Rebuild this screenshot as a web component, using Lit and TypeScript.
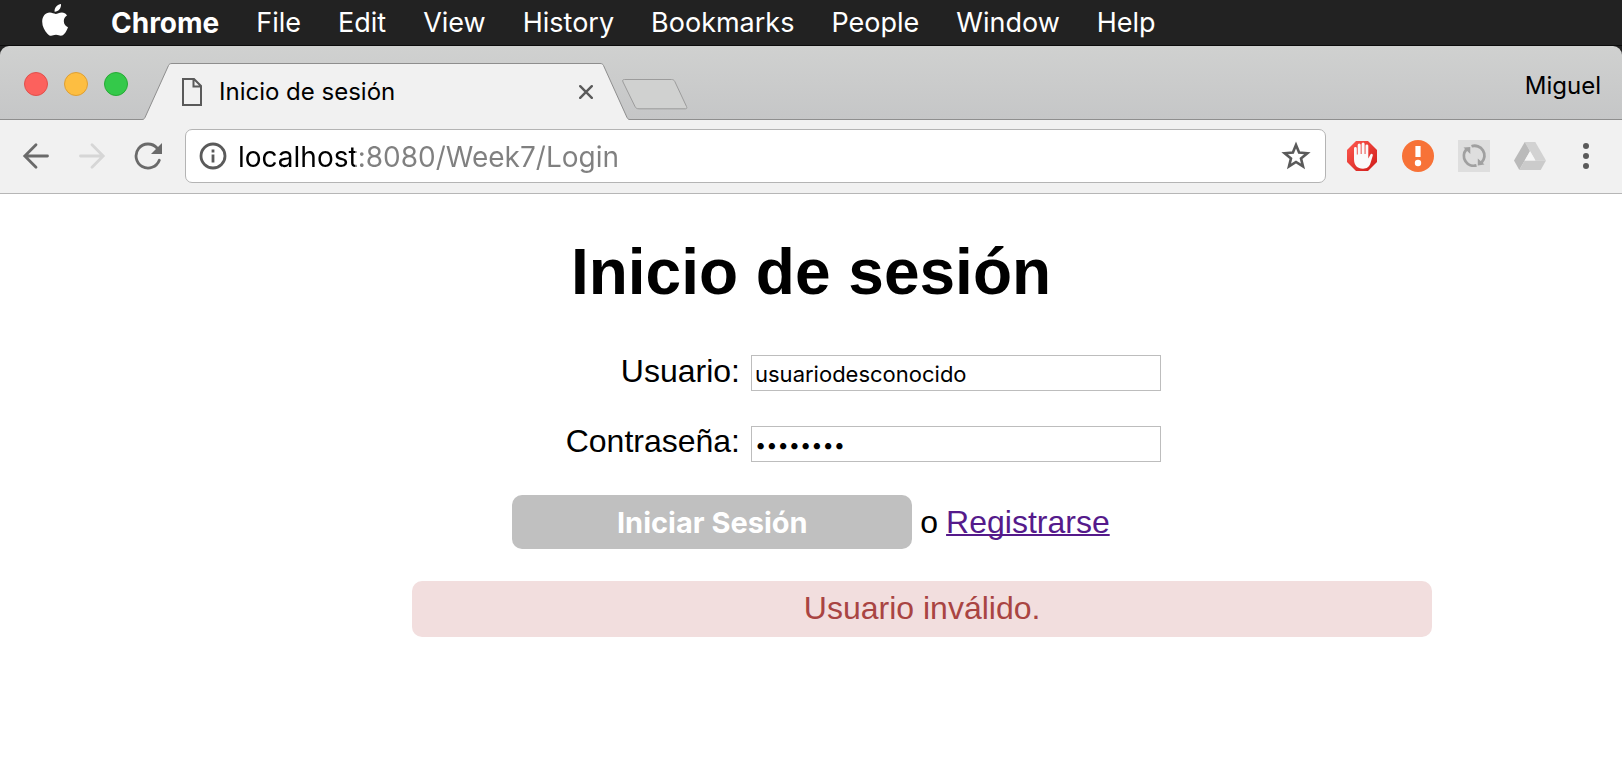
import { LitElement, html, css } from "lit";
import { customElement, property, state } from "lit/decorators.js";

const MENU = ["File", "Edit", "View", "History", "Bookmarks", "People", "Window", "Help"];

@customElement("menu-bar")
class MenuBar extends LitElement {
  static styles = css`
    :host {
      display: block;
      background: #222;
      border-bottom: 1px solid #0c0c0c;
    }
    nav {
      display: flex;
      align-items: center;
      gap: 37px;
      height: 45px;
      padding: 0 42px;
      font: 27px/44px Inter, sans-serif;
      color: #fff;
    }
    button {
      all: unset;
      white-space: nowrap;
    }
    .logo {
      display: block;
      margin: -6px 4px 0 0;
    }
    .logo svg {
      display: block;
    }
    .app {
      font-size: 28px;
      font-weight: 700;
    }
  `;

  render() {
    return html`
      <nav aria-label="Menu bar">
        <button class="logo" aria-label="Apple">
          <svg width="28" height="32" viewBox="0 0 28 32" fill="#fff">
            <path d="M19 0c.3 2.200-.5 4.200-1.700 5.600-1.200 1.400-3 2.300-4.700 2.200-.3-2 .6-4.100 1.700-5.300C15.500 1.100 17.500.1 19 0z"/>
            <path d="M25 11.400c-1.900 1.200-3.200 2.900-3.200 5.600 0 3.100 1.900 5.300 4.200 6.200-.8 2.600-2.100 4.700-3.600 6.600-1 1.200-2 2-3.500 2-1.800 0-2.500-1-4.900-1s-3.200 1-4.900 1c-1.500 0-2.700-.9-3.700-2.100C2.600 26.600.2 22.300.2 17.700c0-5.200 3.200-9.100 7.600-9.100 2.400 0 4.100 1.300 5.900 1.300 1.700 0 3.400-1.400 6.200-1.400 2 0 3.800.9 5.100 2.900z"/>
          </svg>
        </button>
        <button class="app">Chrome</button>
        ${MENU.map((item) => html`<button>${item}</button>`)}
      </nav>
    `;
  }
}

@customElement("tab-strip")
class TabStrip extends LitElement {
  @property() heading = "";

  static styles = css`
    :host {
      display: block;
      background: #222;
    }
    .strip {
      display: flex;
      align-items: flex-end;
      height: 74px;
      padding-right: 21px;
      border-radius: 9px 9px 0 0;
      background: linear-gradient(#d0d1d0, #c5c6c7);
      box-shadow: inset 0 -1px #8e8e8e;
      font: 24px/30px Inter, sans-serif;
      color: #000;
    }
    button {
      all: unset;
      display: block;
    }
    svg {
      display: block;
      flex: none;
    }
    .lights {
      display: flex;
      gap: 16px;
      padding: 0 14px 24px 24px;
    }
    .light {
      width: 24px;
      height: 24px;
      box-sizing: border-box;
      border-radius: 50%;
    }
    .close {
      background: #fc615d;
      border: 1px solid #e0504c;
    }
    .min {
      background: #fdbe41;
      border: 1px solid #de9f34;
    }
    .max {
      background: #34c94a;
      border: 1px solid #27aa35;
    }
    .tab {
      display: flex;
      flex: 0 1 488px;
      height: 57px;
    }
    .face {
      flex: 1;
      display: flex;
      align-items: center;
      box-sizing: border-box;
      border-top: 1px solid #8e8e8e;
      background: #f1f1f1;
      padding: 0 7px 0 10px;
    }
    .title {
      flex: 1;
      padding-left: 17px;
      white-space: nowrap;
    }
    .new {
      align-self: center;
      margin: 21px 0 0 -9px;
    }
    .user {
      margin-left: auto;
      padding-bottom: 19px;
    }
  `;

  render() {
    return html`
      <div class="strip">
        <div class="lights">
          <button class="light close" aria-label="Close window"></button>
          <button class="light min" aria-label="Minimize window"></button>
          <button class="light max" aria-label="Zoom window"></button>
        </div>
        <div class="tab">
          <svg width="30" height="57" viewBox="0 0 30 57">
            <path d="M0 57V56.500C1.500 56.500 2.200 56 3 54.500L26.500 2.500C27.300 1 28 .5 30 .5V57z" fill="#f1f1f1"/>
            <path d="M0 56.500C1.500 56.500 2.200 56 3 54.500L26.500 2.500C27.300 1 28 .5 30 .5" fill="none" stroke="#8e8e8e"/>
          </svg>
          <div class="face">
            <svg width="20" height="28" viewBox="0 0 20 28" fill="none" stroke="#5a5a5a" stroke-width="2">
              <path d="M1 1H12L19 8V27H1zM11.500 1V8.500H19"/>
            </svg>
            <span class="title">${this.heading}</span>
            <button aria-label="Close tab">
              <svg width="14" height="14" viewBox="0 0 14 14" stroke="#5a5a5a" stroke-width="2.400" stroke-linecap="round">
                <path d="M1.200 1.200L12.800 12.800M12.800 1.200L1.200 12.800"/>
              </svg>
            </button>
          </div>
          <svg width="30" height="57" viewBox="0 0 30 57">
            <path d="M30 57V56.500C28.500 56.500 27.800 56 27 54.500L3.500 2.500C2.700 1 2 .5 0 .5V57z" fill="#f1f1f1"/>
            <path d="M30 56.500C28.500 56.500 27.800 56 27 54.500L3.500 2.500C2.700 1 2 .5 0 .5" fill="none" stroke="#8e8e8e"/>
          </svg>
        </div>
        <button class="new" aria-label="New tab">
          <svg width="67" height="32" viewBox="0 0 67 32">
            <path d="M3.500 1.500H50.500C52 1.500 53 2 53.800 3.500L65.500 28.500C66.200 30.200 65.800 30.800 64.500 30.800H18C16 30.800 14.800 30.200 14 28.500L2 4C1.200 2.200 1.800 1.500 3.500 1.500z" fill="#d0d1d0" stroke="#9c9c9c"/>
          </svg>
        </button>
        <button class="user">Miguel</button>
      </div>
    `;
  }
}

@customElement("tool-bar")
class ToolBar extends LitElement {
  @property() url = "";

  static styles = css`
    :host {
      display: block;
      background: #f1f1f1;
      border-bottom: 1px solid #b6b6b6;
    }
    .bar {
      display: flex;
      align-items: center;
      height: 73px;
      padding: 0 33px 2px 22px;
      box-sizing: border-box;
    }
    button {
      all: unset;
      display: block;
    }
    svg {
      display: block;
      flex: none;
    }
    .nav {
      display: flex;
      gap: 28px;
      margin-right: 21px;
    }
    .box {
      flex: 1;
      display: flex;
      align-items: center;
      height: 54px;
      box-sizing: border-box;
      padding: 0 14px 0 13px;
      border: 1px solid #b4b4b4;
      border-radius: 7px;
      background: #fff;
    }
    input {
      all: unset;
      flex: 1;
      min-width: 0;
      margin-left: 11px;
      padding-top: 2px;
      font: 28px/40px Inter, sans-serif;
      color: transparent;
      background: linear-gradient(90deg, #000 117px, #808080 117px);
      -webkit-background-clip: text;
      background-clip: text;
    }
    .extensions {
      display: flex;
      align-items: center;
      gap: 24px;
      margin-left: 20px;
    }
    .more {
      margin-left: 13px;
    }
  `;

  render() {
    return html`
      <div class="bar">
        <div class="nav">
          <button aria-label="Back">
            <svg width="28" height="28" viewBox="0 0 28 28" fill="none" stroke="#6a6a6a" stroke-width="2.800" stroke-linecap="round">
              <path d="M3 14H25.500M14 2.800L2.800 14L14 25.200"/>
            </svg>
          </button>
          <button aria-label="Forward">
            <svg width="28" height="28" viewBox="0 0 28 28" fill="none" stroke="#d6d6d6" stroke-width="2.800" stroke-linecap="round">
              <path d="M2.500 14H25M14 2.800L25.200 14L14 25.200"/>
            </svg>
          </button>
          <button aria-label="Reload">
            <svg width="30" height="28" viewBox="0 0 30 28">
              <path d="M25.300 18.200A12 12 0 1 1 23 6" fill="none" stroke="#6a6a6a" stroke-width="2.800" stroke-linecap="round"/>
              <path d="M28 1V12H17z" fill="#6a6a6a"/>
            </svg>
          </button>
        </div>
        <div class="box">
          <button aria-label="Site information">
            <svg width="28" height="28" viewBox="0 0 28 28">
              <circle cx="14" cy="14" r="12" fill="none" stroke="#5a5a5a" stroke-width="2.800"/>
              <path d="M12.600 7.600H15.400V10.400H12.600zM12.600 12.500H15.400V20.500H12.600z" fill="#5a5a5a"/>
            </svg>
          </button>
          <input type="text" aria-label="Address" spellcheck="false" .value=${this.url} />
          <button aria-label="Bookmark this page">
            <svg width="30" height="30" viewBox="0 0 30 30">
              <path d="M15 4L18.100 11.600L26.300 12.200L20 17.400L22 25.400L15 21L8 25.400L10 17.400L3.700 12.200L11.900 11.600z" fill="none" stroke="#5a5a5a" stroke-width="2.600"/>
            </svg>
          </button>
        </div>
        <div class="extensions">
          <button aria-label="Ad blocker">
            <svg width="32" height="32" viewBox="0 0 32 32">
              <defs>
                <linearGradient id="red" x1="0" y1="0" x2="1" y2="1">
                  <stop offset="0" stop-color="#ff5a50"/>
                  <stop offset="1" stop-color="#cf1b18"/>
                </linearGradient>
              </defs>
              <path d="M10 1H22L31 10V22L22 31H10L1 22V10z" fill="url(#red)"/>
              <path d="M8 19V8.500a1.400 1.400 0 0 1 2.800 0V14.500h.9V5a1.500 1.500 0 0 1 3 0v9h.9V4a1.500 1.500 0 0 1 3 0v10h.9V5.800a1.400 1.400 0 0 1 2.800 0V18.500l2-3.800c.8-1.600 2.900-.9 2.500.9L24.500 23c-1.200 4-3.600 5.700-7.500 5.700-5.800 0-9-3.500-9-9.700z" fill="#fafafa"/>
            </svg>
          </button>
          <button aria-label="Warning">
            <svg width="32" height="32" viewBox="0 0 32 32">
              <circle cx="16" cy="16" r="16" fill="#f77237"/>
              <path d="M13.400 6H18.600V17H13.400z" fill="#fff"/>
              <circle cx="16" cy="23" r="3.200" fill="#fff"/>
            </svg>
          </button>
          <button aria-label="Sync">
            <svg width="32" height="32" viewBox="0 0 32 32">
              <path d="M0 0H32V32H0z" fill="#dedede"/>
              <path d="M13.500 6.300A9.800 9.800 0 0 1 23.600 22.500M18.500 25.300A9.800 9.800 0 0 1 8.300 9.500" fill="none" stroke="#a0a0a0" stroke-width="2.800"/>
              <path d="M5.500 7.500L12.300 7V14zM26.500 24.500L19.800 25.500V18.500z" fill="#a0a0a0"/>
            </svg>
          </button>
          <button aria-label="Drive">
            <svg width="32" height="32" viewBox="0 0 32 32">
              <path d="M10.800 2H21.300L32 20.500H21.500z" fill="#d2d2d2"/>
              <path d="M10.800 2L16 11.200L5.300 30L0 20.500z" fill="#bababa"/>
              <path d="M10.700 20.500H32L26.700 30H5.300z" fill="#cbcbcb"/>
              <path d="M16 11.200L21.400 20.500H10.700z" fill="#f6f6f6"/>
            </svg>
          </button>
          <button class="more" aria-label="Menu">
            <svg width="6" height="26" viewBox="0 0 6 26" fill="#5a5a5a">
              <circle cx="3" cy="3" r="3"/><circle cx="3" cy="13" r="3"/><circle cx="3" cy="23" r="3"/>
            </svg>
          </button>
        </div>
      </div>
    `;
  }
}

@customElement("login-form")
class LoginForm extends LitElement {
  @state() error = "Usuario inválido.";

  static styles = css`
    :host {
      display: block;
      padding: 41px 0 48px;
      font: 32px/36px "Liberation Sans", Arial, sans-serif;
      color: #000;
    }
    h1 {
      margin: 0 0 44px;
      font-size: 64px;
      line-height: 74px;
      text-align: center;
    }
    form {
      max-width: 800px;
      margin: 0 auto;
    }
    .row {
      display: grid;
      grid-template-columns: 329px 410px;
      column-gap: 11px;
      align-items: baseline;
      margin-bottom: 32px;
    }
    label {
      text-align: right;
    }
    input {
      box-sizing: border-box;
      width: 100%;
      height: 36px;
      margin: 0;
      padding: 2px 3px 0;
      border: 1px solid #bdbdbd;
      border-radius: 0;
      background: #fff;
      font: 22px Inter, sans-serif;
      color: #000;
    }
    input[type="password"] {
      font-size: 20px;
    }
    .actions {
      display: flex;
      justify-content: center;
      align-items: baseline;
      gap: 8px;
      margin: 33px 0 32px;
    }
    .submit {
      width: 400px;
      height: 54px;
      padding: 0;
      border: 0;
      border-radius: 10px;
      background: #c0c0c0;
      font: 700 29px Inter, sans-serif;
      color: #fff;
    }
    a {
      color: #551a8b;
      text-decoration-thickness: 2px;
      text-decoration-skip-ink: none;
    }
    .error {
      margin: 0 11.700% 0 25.400%;
      padding: 9px 10px 11px;
      border-radius: 10px;
      background: #f2dede;
      color: #a94442;
      text-align: center;
    }
  `;

  render() {
    return html`
      <h1>Inicio de sesión</h1>
      <form @submit=${(e: Event) => e.preventDefault()}>
        <div class="row">
          <label for="user">Usuario:</label>
          <input id="user" type="text" spellcheck="false" value="usuariodesconocido" />
        </div>
        <div class="row">
          <label for="pass">Contraseña:</label>
          <input id="pass" type="password" value="password" />
        </div>
        <div class="actions">
          <button class="submit" type="submit">Iniciar Sesión</button>
          <span>o</span>
          <a href="#registro">Registrarse</a>
        </div>
      </form>
      <div class="error" role="alert">${this.error}</div>
    `;
  }
}

@customElement("app-root")
class AppRoot extends LitElement {
  static styles = css`
    :host {
      display: block;
      min-height: 100vh;
      background: #fff;
    }
  `;

  render() {
    return html`
      <menu-bar></menu-bar>
      <tab-strip heading="Inicio de sesión"></tab-strip>
      <tool-bar url="localhost:8080/Week7/Login"></tool-bar>
      <login-form></login-form>
    `;
  }
}
